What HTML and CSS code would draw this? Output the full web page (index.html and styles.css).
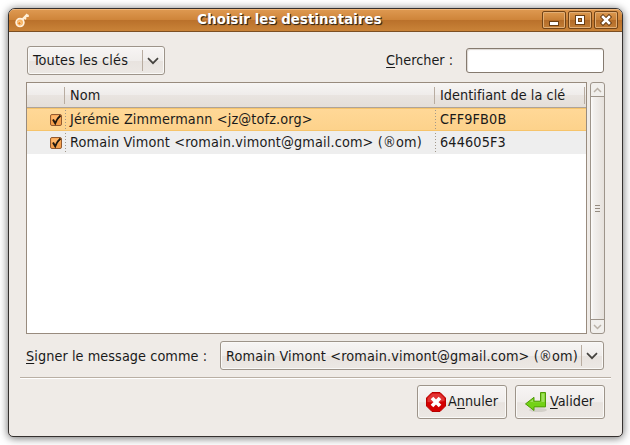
FILE: index.html
```html
<!DOCTYPE html>
<html lang="fr">
<head>
<meta charset="utf-8">
<title>Choisir les destinataires</title>
<link rel="stylesheet" href="styles.css">
</head>
<body>
<main class="window">
  <header class="titlebar">
    <svg class="key" width="16" height="16" viewBox="0 0 16 16"><path d="M6.500 8.500 12.500 2.200M11 3.600l2.800.2M9 6l2.300.6" stroke="#fff0d8" stroke-width="2.300"/><circle cx="5" cy="10.600" r="3.900" fill="#f7b565" stroke="#fff0dc" stroke-width="1.700"/><circle cx="4.400" cy="11.300" r="1.600" fill="#e8811a" stroke="#ffe2bd" stroke-width=".6"/></svg>
    <h1 class="title">Choisir les destinataires</h1>
    <div class="controls">
      <button class="control" aria-label="Réduire"><svg width="22" height="16"><path d="M6 9h10v5H6z" fill="#6b3f15"/><path d="M7 10h8v3H7z" fill="#fff"/></svg></button>
      <button class="control" aria-label="Agrandir"><svg width="22" height="16"><path d="M6 3h10v10H6z" fill="#6b3f15"/><path d="M7 4h8v8H7zM9 6v4h4V6z" fill="#fff" fill-rule="evenodd"/><path d="M10 7h2v2h-2z" fill="#c27d35"/></svg></button>
      <button class="control" aria-label="Fermer"><svg width="22" height="16"><path d="m8 5 6 6m0-6-6 6" stroke="#6b3f15" stroke-width="4.500" stroke-linecap="square"/><path d="m8 5 6 6m0-6-6 6" stroke="#fff" stroke-width="2.500" stroke-linecap="square"/></svg></button>
    </div>
  </header>
  <section class="content">
    <div class="filters">
      <button class="combo combo-filter"><span class="label">Toutes les clés</span><span class="arrow"><svg width="12" height="8"><path d="m1 1.200 5 5 5-5" fill="none" stroke="#45433f" stroke-width="1.700"/></svg></span></button>
      <label class="search"><span class="search-label"><u>C</u>hercher :</span><input class="entry" type="text"></label>
    </div>
    <div class="list">
      <div class="table">
        <div class="row head"><span class="cell"></span><span class="cell name">Nom</span><span class="cell id">Identifiant de la clé</span></div>
        <div class="row selected"><span class="cell tick"><svg class="check" width="14" height="14"><rect x="1.500" y="1.500" width="11" height="11" rx="1.500" fill="#f5a04c" stroke="#925a31"/><path d="M2.500 2.500h9v4h-9z" fill="#ffb669"/><path d="m4 6.500 2.200 3.800Q8 5.500 11.500 2.500" fill="none" stroke="#20180e" stroke-width="1.900"/></svg></span><span class="cell name">Jérémie Zimmermann &lt;jz@tofz.org&gt;</span><span class="cell id">CFF9FB0B</span></div>
        <div class="row alt"><span class="cell tick"><svg class="check" width="14" height="14"><rect x="1.500" y="1.500" width="11" height="11" rx="1.500" fill="#f5a04c" stroke="#925a31"/><path d="M2.500 2.500h9v4h-9z" fill="#ffb669"/><path d="m4 6.500 2.200 3.800Q8 5.500 11.500 2.500" fill="none" stroke="#20180e" stroke-width="1.900"/></svg></span><span class="cell name">Romain Vimont &lt;romain.vimont@gmail.com&gt; (®om)</span><span class="cell id">644605F3</span></div>
      </div>
      <div class="scrollbar">
        <span class="step"><svg width="9" height="6"><path d="m1 5 3.500-3.500L8 5" fill="none" stroke="#b9b1a7" stroke-width="1.500"/></svg></span>
        <span class="thumb"><i></i><i></i><i></i></span>
        <span class="step"><svg width="9" height="6"><path d="m1 1 3.500 3.500L8 1" fill="none" stroke="#b9b1a7" stroke-width="1.500"/></svg></span>
      </div>
    </div>
    <div class="signer">
      <span class="signer-label"><u>S</u>igner le message comme :</span>
      <button class="combo combo-signer"><span class="label">Romain Vimont &lt;romain.vimont@gmail.com&gt; (®om)</span><span class="arrow"><svg width="12" height="8"><path d="m1 1.200 5 5 5-5" fill="none" stroke="#45433f" stroke-width="1.700"/></svg></span></button>
    </div>
  </section>
  <footer class="actions">
    <button class="action cancel"><svg width="20" height="20"><path d="M6 .5h8L19.500 6v8L14 19.500H6L.5 14V6z" fill="#d40000" stroke="#b80000"/><path d="M6.300 1.500h7.400L18.500 6.300V9Q10 11 1.500 10V6.300z" fill="#e85050" opacity=".65"/><path d="m6 6 8 8m0-8-8 8" stroke="#fff" stroke-width="3.700"/></svg><span>A<u>n</u>nuler</span></button>
    <button class="action accept"><svg width="24" height="22"><ellipse cx="13" cy="19" rx="9" ry="2" fill="#d3d0c9"/><path d="M15.500 1.500h5v14.400H9v3.600l-8.500-6.600L9 6.300v3.900h6.500z" fill="#73d216" stroke="#4e9a06" stroke-linejoin="round"/><path d="M16.500 2.500h3V11H4.800L8 8.400v2.800h8.500z" fill="#a0df60"/></svg><span><u>V</u>alider</span></button>
  </footer>
</main>
</body>
</html>
```
FILE: styles.css
```css
* { box-sizing: border-box; }
body {
  margin: 0;
  padding: 8px;
  width: 630px;
  height: 445px;
  overflow: hidden;
  background: #fff;
  color: #1a1a1a;
  font: 14.3px/20px "DejaVu Sans Condensed", "DejaVu Sans", sans-serif;
  font-stretch: condensed;
  letter-spacing: .15px;
}
button { font: inherit; letter-spacing: inherit; color: inherit; padding: 0; margin: 0; }
svg { display: block; flex: none; }
u { text-decoration: underline; text-underline-offset: 2px; text-decoration-thickness: 1px; text-decoration-skip-ink: none; }
.window {
  width: 615px;
  height: 429px;
  border: 1px solid #35312f;
  border-radius: 7px 7px 5px 5px;
  background: #efebe7;
  box-shadow: 0 1px 9px rgba(0, 0, 0, .6);
  overflow: hidden;
}
.titlebar {
  display: flex;
  align-items: center;
  height: 23px;
  padding: 0 4px 0 6px;
  border-bottom: 1px solid #7c4f23;
  background: linear-gradient(#f0b679 0 1px, #dd9850 1px, #ce8439 50%, #ba712b 52%, #c98338);
}
.title {
  flex: 1;
  margin: 0;
  padding-left: 6px;
  text-align: center;
  color: #fff;
  font-family: "DejaVu Sans", sans-serif;
  font-stretch: normal;
  font-size: 13.3px;
  letter-spacing: .1px;
  line-height: 18px;
  text-shadow: 1px 1px 1px #3b2815, 1px 1px 0 #4c3820;
}
.controls { display: flex; gap: 2px; }
.control {
  width: 24px;
  height: 18px;
  border: 1px solid #724417;
  border-radius: 2px;
  background: linear-gradient(#dc994f, #c77f36 50%, #b36c29 52%, #c27d35);
  box-shadow: inset 0 0 0 1px #e1ae75;
}
.content { padding: 14px 17px 0; }
.filters { display: flex; align-items: center; justify-content: space-between; height: 29px; padding: 0 1px; }
.combo {
  display: flex;
  align-items: center;
  height: 29px;
  border: 1px solid #9d948a;
  border-radius: 3px;
  background: linear-gradient(#f7f5f4, #f0edeb 50%, #e8e3df 52%, #ece8e4);
  box-shadow: inset 0 0 0 1px #faf9f7;
}
.combo-filter { width: 138px; padding-left: 5px; }
.combo-signer { width: 384px; padding-left: 5px; }
.label { flex: 1; min-width: 0; text-align: left; white-space: nowrap; }
.combo-filter .label { padding-bottom: 1px; }
.arrow {
  display: flex;
  flex: none;
  align-items: center;
  justify-content: center;
  width: 22px;
  height: 21px;
  padding-right: 2px;
  border-left: 1px solid #b8aca0;
}
.search { display: flex; align-items: center; gap: 13px; }
.search-label { padding-bottom: 1px; letter-spacing: 0; }
.signer-label { letter-spacing: .08px; }
.entry {
  width: 138px;
  height: 25px;
  border: 1px solid #857a6f;
  border-radius: 3px;
  background: #fff;
  box-shadow: inset 1px 1px 1px #ddd8d3;
}
.list { display: flex; gap: 3px; height: 252px; margin-top: 7px; }
.table { flex: none; width: 561px; border: 1px solid #988b7e; background: #fff; }
.row { display: grid; grid-template-columns: 38px 370px 1fr; height: 23px; align-items: stretch; }
.cell { line-height: 23px; white-space: nowrap; }
.cell + .cell {
  padding-left: 5px;
  background: repeating-linear-gradient(transparent 0 2px, #a1988b 2px 3px) 0 0 / 1px 100% no-repeat;
}
.head {
  grid-template-columns: 37px 370px 1fr;
  height: 25px;
  padding: 4px 0 3px;
  border-bottom: 1px solid #aea398;
  background: linear-gradient(#f7f5f4, #efecea 50%, #e9e4e0 52%, #e4ded8);
}
.head .cell { line-height: 17px; }
.head .cell + .cell { border-left: 1px solid #b8aca0; background: none; }
.head .id { margin-right: 1px; border-right: 1px solid #b8aca0; letter-spacing: .05px; }
.selected { background: linear-gradient(#f6c46b 0 1px, #ffd897 1px, #fdd28b 22px, #f6c46b 22px); }
.alt { background: #eee; }
.tick { display: flex; align-items: center; padding-left: 22px; }
.scrollbar { display: flex; flex: none; flex-direction: column; width: 15px; border: 1px solid #9d948a; border-radius: 3px; background: #f1efec; }
.step { display: flex; align-items: center; justify-content: center; height: 13px; }
.thumb {
  display: flex;
  flex: 1;
  flex-direction: column;
  align-items: center;
  justify-content: center;
  gap: 2px;
  border: solid #9d948a;
  border-width: 1px 0;
  background: linear-gradient(90deg, #fbfaf9 0 1px, #f3f1ef 2px, #e6e1dc);
}
.thumb i { width: 5px; height: 1px; background: #958b80; }
.signer { display: flex; align-items: center; justify-content: space-between; height: 29px; margin-top: 7px; padding-right: 1px; }
.actions {
  display: flex;
  justify-content: flex-end;
  gap: 8px;
  margin: 7px 11px 0;
  padding: 7px 6px 0 0;
  border-top: 1px solid #b9afa4;
  box-shadow: inset 0 1px #fff;
}
.action {
  display: flex;
  align-items: center;
  width: 90px;
  height: 34px;
  border: 1px solid #9d948a;
  border-radius: 3px;
  background: linear-gradient(#f7f5f4, #f0edeb 50%, #e8e3df 52%, #ece8e4);
  box-shadow: inset 0 0 0 1px #faf9f7;
}
.action span { padding-bottom: 2px; letter-spacing: 0; }
.cancel { gap: 2px; padding-left: 8px; }
.accept { gap: 1px; padding-left: 9px; }
```
